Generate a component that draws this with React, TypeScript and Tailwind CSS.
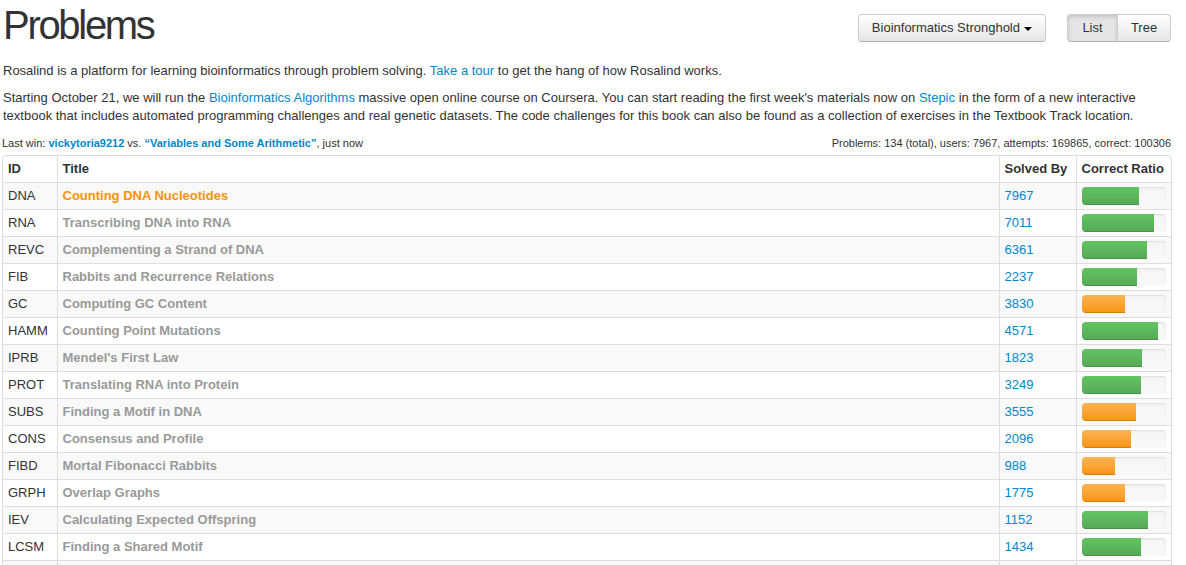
import React, { FC } from "react"

interface Problem {
  id: string
  title: string
  solved: number
  ratio: number
  good: boolean
}

const problems: Problem[] = [
  { id: "DNA", title: "Counting DNA Nucleotides", solved: 7967, ratio: 68, good: true },
  { id: "RNA", title: "Transcribing DNA into RNA", solved: 7011, ratio: 86, good: true },
  { id: "REVC", title: "Complementing a Strand of DNA", solved: 6361, ratio: 78, good: true },
  { id: "FIB", title: "Rabbits and Recurrence Relations", solved: 2237, ratio: 66, good: true },
  { id: "GC", title: "Computing GC Content", solved: 3830, ratio: 51, good: false },
  { id: "HAMM", title: "Counting Point Mutations", solved: 4571, ratio: 91, good: true },
  { id: "IPRB", title: "Mendel's First Law", solved: 1823, ratio: 72, good: true },
  { id: "PROT", title: "Translating RNA into Protein", solved: 3249, ratio: 70, good: true },
  { id: "SUBS", title: "Finding a Motif in DNA", solved: 3555, ratio: 65, good: false },
  { id: "CONS", title: "Consensus and Profile", solved: 2096, ratio: 58, good: false },
  { id: "FIBD", title: "Mortal Fibonacci Rabbits", solved: 988, ratio: 40, good: false },
  { id: "GRPH", title: "Overlap Graphs", solved: 1775, ratio: 51, good: false },
  { id: "IEV", title: "Calculating Expected Offspring", solved: 1152, ratio: 79, good: true },
  { id: "LCSM", title: "Finding a Shared Motif", solved: 1434, ratio: 70, good: true },
  { id: "LIA", title: "Independent Alleles", solved: 1010, ratio: 55, good: false },
  { id: "MPRT", title: "Finding a Protein Motif", solved: 1046, ratio: 48, good: false },
]

const Bar: FC<{ ratio: number; good: boolean }> = ({ ratio, good }) => (
  <div className="h-[18px] w-full rounded-[4px] bg-gradient-to-b from-[#f5f5f5] to-[#f9f9f9] shadow-[inset_0_1px_2px_rgba(0,0,0,0.1)] overflow-hidden">
    <div
      className={
        good
          ? "h-full bg-gradient-to-b from-[#62c462] to-[#57a957] shadow-[inset_0_-1px_0_rgba(0,0,0,0.15)]"
          : "h-full bg-gradient-to-b from-[#fbb450] to-[#f89406] shadow-[inset_0_-1px_0_rgba(0,0,0,0.15)]"
      }
      style={{ width: `${ratio}%` }}
    />
  </div>
)

const App: FC = () => {
  return (
    <div className="pl-[2px] pt-[5px] w-[1172px] text-[13px] leading-[18px] text-[#333] font-['Liberation_Sans',Arial,sans-serif] bg-white">
      <div className="flex items-start justify-between">
        <h1 className="pl-[1px] text-[40px] leading-[40px] tracking-[-2.3px] font-normal text-[#333]">Problems</h1>
        <div className="flex items-center mt-[9px] gap-[21px] pr-[1px]">
          <div className="h-[28px] px-[13px] flex items-center gap-[4px] rounded-[4px] border border-[#ccc] border-b-[#b3b3b3] bg-gradient-to-b from-white to-[#e6e6e6] shadow-[inset_0_1px_0_rgba(255,255,255,0.2),0_1px_2px_rgba(0,0,0,0.05)]">
            <span>Bioinformatics Stronghold</span>
            <span className="w-0 h-0 border-l-[4px] border-r-[4px] border-t-[4px] border-l-transparent border-r-transparent border-t-black mt-[1px]" />
          </div>
          <div className="flex h-[28px]">
            <div className="w-[51px] flex items-center justify-center rounded-l-[4px] border border-[#ccc] border-b-[#b3b3b3] bg-[#e6e6e6] shadow-[inset_0_2px_4px_rgba(0,0,0,0.15)]">
              List
            </div>
            <div className="w-[54px] -ml-px flex items-center justify-center rounded-r-[4px] border border-[#ccc] border-b-[#b3b3b3] bg-gradient-to-b from-white to-[#e6e6e6]">
              Tree
            </div>
          </div>
        </div>
      </div>

      <p className="mt-[17px] mb-[9px] pl-[1px]">
        Rosalind is a platform for learning bioinformatics through problem solving.{" "}
        <span className="text-[#0088cc]">Take a tour</span> to get the hang of how Rosalind works.
      </p>
      <p className="mb-[9px] pl-[1px] pr-[10px]">
        Starting October 21, we will run the <span className="text-[#0088cc]">Bioinformatics Algorithms</span>{" "}
        massive open online course on Coursera. You can start reading the first week's materials now on{" "}
        <span className="text-[#0088cc]">Stepic</span> in the form of a new interactive
        <br />
        textbook that includes automated programming challenges and real genetic datasets. The code challenges for
        this book can also be found as a collection of exercises in the Textbook Track location.
      </p>

      <div className="flex justify-between text-[11px] leading-[18px] mb-[3px]">
        <div>
          Last win: <span className="font-bold text-[#0088cc]">vickytoria9212</span> vs.{" "}
          <span className="font-bold text-[#0088cc]">“Variables and Some Arithmetic”</span>, just now
        </div>
        <div className="pr-[1px]">Problems: 134 (total), users: 7967, attempts: 169865, correct: 100306</div>
      </div>

      <div className="w-[1170px] border border-[#ddd] rounded-[4px] overflow-hidden">
        <table className="w-full table-fixed border-collapse">
          <colgroup>
            <col className="w-[54px]" />
            <col className="w-[942px]" />
            <col className="w-[77px]" />
            <col />
          </colgroup>
          <thead>
            <tr className="text-left whitespace-nowrap">
              <th className="px-[5px] py-[4px] font-bold">ID</th>
              <th className="px-[5px] py-[4px] font-bold border-l border-[#ddd]">Title</th>
              <th className="px-[5px] py-[4px] font-bold border-l border-[#ddd]">Solved By</th>
              <th className="px-[5px] py-[4px] font-bold border-l border-[#ddd]">Correct Ratio</th>
            </tr>
          </thead>
          <tbody>
            {problems.map((problem, index) => {
              return (
                <tr key={problem.id} className={index % 2 === 0 ? "bg-[#f9f9f9]" : "bg-white"}>
                  <td className="px-[5px] py-[4px] border-t border-[#ddd]">{problem.id}</td>
                  <td
                    className={
                      index === 0
                        ? "px-[5px] py-[4px] border-t border-l border-[#ddd] font-bold text-[#f89406]"
                        : "px-[5px] py-[4px] border-t border-l border-[#ddd] font-bold text-[#999]"
                    }
                  >
                    {problem.title}
                  </td>
                  <td className="px-[5px] py-[4px] border-t border-l border-[#ddd] text-[#0088cc]">{problem.solved}</td>
                  <td className="px-[5px] py-[4px] border-t border-l border-[#ddd]">
                    <Bar ratio={problem.ratio} good={problem.good} />
                  </td>
                </tr>
              )
            })}
          </tbody>
        </table>
      </div>
    </div>
  )
}

export default App
